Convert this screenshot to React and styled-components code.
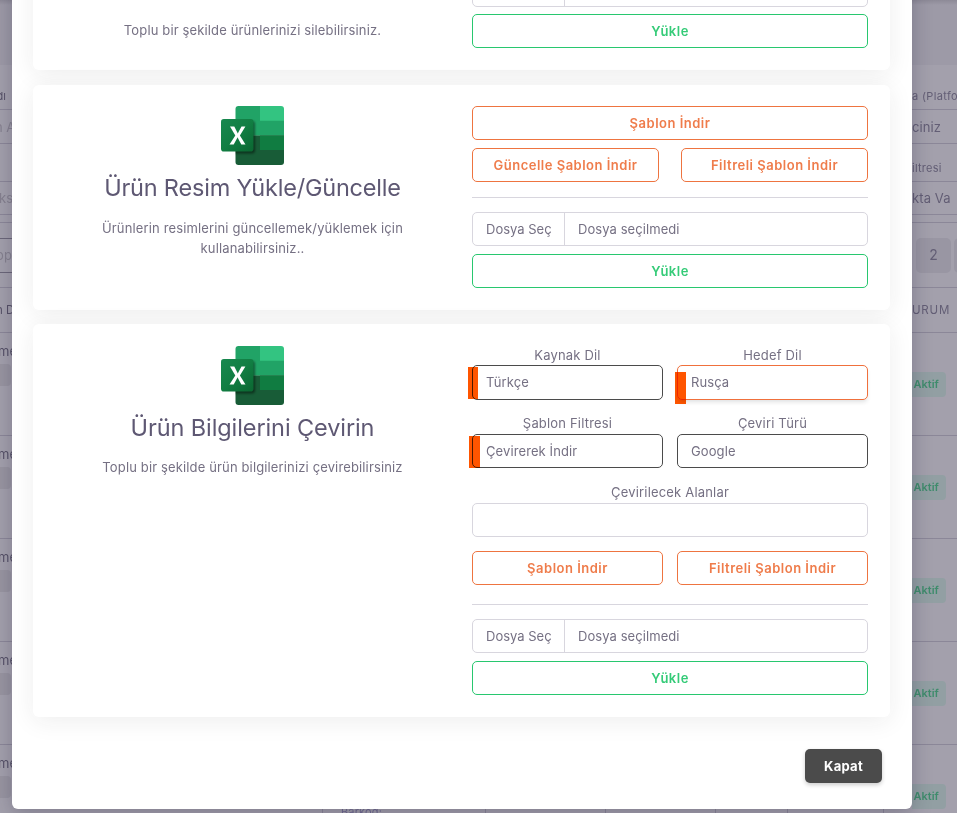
import React from "react";
import styled, { createGlobalStyle } from "styled-components";

const GlobalStyle = createGlobalStyle`
  *, *::before, *::after { box-sizing: border-box; }
  html, body { margin: 0; height: 100%; overflow: hidden; }
  body {
    background: #a3a0ac;
    color: #757083;
    font: 400 13px/20px Inter, "Open Sans", sans-serif;
    letter-spacing: 0.14px;
  }
`;

/* ---------- dimmed page ---------- */

const Page = styled.main`
  position: relative;
  height: 813px;
  overflow: hidden;
  display: flex;
  flex-direction: column;
  background: #a3a0ac;
`;

const Line = styled.div`
  display: flex;
  flex: none;
  justify-content: space-between;
  align-items: ${(p) => p.$align || "center"};
  height: ${(p) => p.$h}px;
  background: ${(p) => p.$bg || "transparent"};
  border-bottom: ${(p) => (p.$rule ? `1px solid ${p.$rule}` : "0")};
`;

const Left = styled.div`
  width: 20px;
  white-space: nowrap;
  display: flex;
  flex-direction: column;
  align-items: flex-start;
  font-size: ${(p) => p.$size || 13}px;
  color: ${(p) => (p.$faint ? "#85818f" : "#565167")};
  padding-top: ${(p) => p.$top || 0}px;
  margin-left: ${(p) => p.$shift || 0}px;
  letter-spacing: 0;
`;

const Right = styled.div`
  width: 45px;
  white-space: nowrap;
  display: flex;
  gap: 3px;
  padding-left: ${(p) => p.$pad || 0}px;
  padding-top: ${(p) => p.$top || 0}px;
  font-size: ${(p) => p.$size || 13}px;
  letter-spacing: ${(p) => p.$ls || 0}px;
  color: #635e75;
`;

const PageButton = styled.span`
  flex: none;
  width: 35px;
  height: 35px;
  border-radius: 5px;
  background: #9996a3;
  font-size: 14px;
  line-height: 33px;
  text-align: center;
`;

const SearchEdge = styled.div`
  width: 20px;
  height: 35px;
  margin-left: -4px;
  border: solid #6b6779;
  border-width: 1px 0;
  line-height: 33px;
  color: #85818f;
`;

const Thumb = styled.span`
  width: 11px;
  height: 22px;
  margin-top: 3px;
  margin-left: ${(p) => p.$shift}px;
  border-radius: 0 4px 4px 0;
  background: #9895a1;
`;

const Pill = styled.span`
  width: 34px;
  height: 25px;
  background: #929fa3;
  border-radius: 0 4px 4px 0;
  color: #3f8c6c;
  font-size: 11px;
  font-weight: 600;
  line-height: 24px;
  padding-left: 1.5px;
`;

const FootCells = styled.div`
  position: absolute;
  left: 322px;
  right: 0;
  bottom: 0;
  height: 68px;
  display: grid;
  grid-template-columns: 163px 120px 110px 72px 96px 1fr;
  font-size: 11px;
`;

const FootCell = styled.div`
  border-left: 1px solid #8b8798;
  padding: 59px 0 0 18px;
  line-height: 16px;
  color: #706a90;
  white-space: nowrap;
`;

/* ---------- modal ---------- */

const Modal = styled.section`
  position: absolute;
  left: 12px;
  top: -60px;
  width: 900px;
  height: 869px;
  padding: 0 22px 0 21px;
  border-radius: 6px;
  background: #fff;
  box-shadow: 0 5px 20px rgba(34, 28, 56, 0.28);
  display: flex;
  flex-direction: column;
`;

const Card = styled.article`
  flex: none;
  height: ${(p) => p.$h}px;
  margin-bottom: ${(p) => p.$gap}px;
  padding: 21px 22px 0 21px;
  display: grid;
  grid-template-columns: 397px 396px;
  column-gap: 21px;
  background: #fff;
  border-radius: 6px;
  box-shadow: 0 4px 24px rgba(34, 34, 34, 0.08);
`;

const Info = styled.div`
  display: flex;
  flex-direction: column;
  align-items: center;
  text-align: center;
  padding-top: ${(p) => p.$top || 0}px;
`;

const Title = styled.h2`
  margin: 6px 0 ${(p) => p.$mb}px;
  font-size: 23.5px;
  line-height: 34px;
  font-weight: 400;
  letter-spacing: ${(p) => p.$ls}px;
  color: #5e5873;
`;

const Description = styled.p`
  margin: 0;
  max-width: 340px;
`;

const Form = styled.div`
  display: flex;
  flex-direction: column;
`;

const Spacer = styled.div`
  flex: none;
  height: 12px;
`;

const Pair = styled.div`
  display: grid;
  grid-template-columns: 1fr 1fr;
  column-gap: ${(p) => p.$gap}px;
  margin-top: ${(p) => p.$mt || 0}px;
`;

const tones = { orange: "#ee7440", green: "#28c76f" };
const labels = { orange: "#ef7c4b", green: "#35cb78" };

const OutlineButton = styled.button`
  width: 100%;
  height: 34px;
  margin: ${(p) => p.$mt || 0}px 0 0;
  padding: 0;
  border: 1px solid ${(p) => tones[p.$tone]};
  border-radius: 5px;
  background: transparent;
  color: ${(p) => labels[p.$tone]};
  font: 600 13px/32px Inter, sans-serif;
  letter-spacing: 0.5px;
`;

const Rule = styled.hr`
  width: 100%;
  height: 1px;
  margin: ${(p) => p.$mt}px 0 14px;
  border: 0;
  background: #d8d6de;
`;

const FileField = styled.div`
  flex: none;
  display: flex;
  height: 34px;
  border: 1px solid #d8d6de;
  border-radius: 5px;
  line-height: 33px;
`;

const FileTrigger = styled.span`
  width: 92px;
  padding-left: 13px;
  border-right: 1px solid #d8d6de;
  letter-spacing: 0;
`;

const FileName = styled.span`
  padding-left: 13px;
  letter-spacing: 0.07px;
`;

const Field = styled.div`
  display: flex;
  flex-direction: column;
  margin-top: ${(p) => p.$mt || 0}px;
`;

const Label = styled.label`
  height: 20px;
  line-height: ${(p) => (p.$raised ? 18 : 20)}px;
  text-align: center;
  letter-spacing: 0.18px;
`;

const borders = { dark: "#4b4b4b", active: "#f0703c", light: "#d8d6de" };

const Control = styled.div`
  position: relative;
  height: ${(p) => p.$h || 34}px;
  padding-left: 13px;
  border: 1px solid ${(p) => borders[p.$kind]};
  border-radius: 5px;
  line-height: 33px;
  letter-spacing: 0.1px;
  box-shadow: ${(p) => (p.$kind === "active" ? "0 3px 4px -1px rgba(34, 41, 47, 0.14)" : "none")};
`;

const Marker = styled.span`
  position: absolute;
  left: ${(p) => p.$x}px;
  top: ${(p) => p.$y}px;
  width: ${(p) => p.$w}px;
  height: 32px;
  background: #ff5500;
  mix-blend-mode: multiply;
`;

const Footer = styled.footer`
  display: flex;
  justify-content: flex-end;
  padding: 0 8px 0 0;
`;

const CloseButton = styled.button`
  width: 77px;
  height: 34px;
  padding: 0;
  border: 0;
  border-radius: 5px;
  background: #4b4b4b;
  color: #fff;
  font: 700 13px/34px Inter, sans-serif;
  letter-spacing: 0.25px;
  box-shadow: 0 2px 4px rgba(0, 0, 0, 0.2);
`;

const Logo = styled.svg`
  display: block;
  flex: none;
`;

function ExcelLogo({ id }) {
  return (
    <Logo width="63" height="59" viewBox="0 0 63 59" aria-label="Excel">
      <defs>
        <clipPath id={`${id}-book`}>
          <rect x="14.5" y="0" width="48.5" height="59" rx="3" />
        </clipPath>
        <linearGradient id={`${id}-tile`} x1="0" y1="0" x2="1" y2="1">
          <stop offset="0" stopColor="#18884f" />
          <stop offset="0.5" stopColor="#117e43" />
          <stop offset="1" stopColor="#0b6631" />
        </linearGradient>
        <filter id={`${id}-soft`} x="-20%" y="-20%" width="150%" height="150%">
          <feGaussianBlur stdDeviation="1" />
        </filter>
      </defs>
      <g clipPath={`url(#${id}-book)`}>
        <path fill="#21a366" d="M14 0h26v15H14z" />
        <path fill="#33c481" d="M39 0h24v15H39z" />
        <path fill="#21a366" d="M39 14.7h24v15H39z" />
        <path fill="#21a366" d="M14 14.7h25v15H14z" />
        <path fill="#185c37" d="M14 29.4h49V59H14z" />
        <path fill="#107c41" d="M39 29.4h24v14.7H39z" />
        <rect x="2" y="15" width="32" height="32.5" rx="3" fill="#000" opacity="0.45" filter={`url(#${id}-soft)`} />
      </g>
      <rect x="0" y="13" width="32.5" height="32.5" rx="2.8" fill={`url(#${id}-tile)`} />
      <path
        fill="#fff"
        d="M8.5 38.5l5.8-9-5.3-9h4.3l2.9 5.7c.3.6.5 1 .5 1.3h.1l.6-1.3 3.1-5.7h3.9l-5.5 8.9 5.6 9.1h-4.2l-3.3-6.3c-.2-.3-.3-.6-.4-.9h-.1c-.1.3-.2.6-.4.9l-3.4 6.3z"
      />
    </Logo>
  );
}

function FilePicker() {
  return (
    <FileField>
      <FileTrigger>Dosya Seç</FileTrigger>
      <FileName>Dosya seçilmedi</FileName>
    </FileField>
  );
}

function Select({ label, value, kind = "dark", h, mt, raised, marker }) {
  return (
    <Field $mt={mt}>
      <Label $raised={raised}>{label}</Label>
      <Control $kind={kind} $h={h}>
        {value}
        {marker && <Marker $x={marker[0]} $y={marker[1]} $w={marker[2]} />}
      </Control>
    </Field>
  );
}

const RULE = "#8b8798";

function Backdrop() {
  return (
    <>
      <Line $h={65} $bg="linear-gradient(#8d8a97, #9d9aa7 5px, #9d9aa7)" />
      <Line $h={45} $rule={RULE} $align="flex-start">
        <Left $size={11} $top={21} $shift={-3.5}>dı</Left>
        <Right $size={11} $top={21} $ls={0.35}>a (Platfo</Right>
      </Line>
      <Line $h={34} $rule={RULE}>
        <Left $faint $shift={-5}>n A</Left>
        <Right $ls={0.1}>ciniz</Right>
      </Line>
      <Line $h={38} $rule={RULE} $align="flex-start">
        <Left />
        <Right $size={11} $top={14} $ls={0.25}>iltresi</Right>
      </Line>
      <Line $h={33} $rule={RULE}>
        <Left $faint $shift={-1}>ks</Left>
        <Right $ls={0.1}>kta Va</Right>
      </Line>
      <Line $h={8} $rule={RULE} />
      <Line $h={65} $rule={RULE}>
        <SearchEdge>op</SearchEdge>
        <Right $pad={4}>
          <PageButton>2</PageButton>
          <PageButton />
        </Right>
      </Line>
      <Line $h={45} $rule={RULE}>
        <Left $size={11.5} $shift={-4}>n D</Left>
        <Right $size={11.5} $ls={0.8}>URUM</Right>
      </Line>
      {[0, 1, 2, 3, 4].map((n) => (
        <Line key={n} $h={103} $rule={RULE} $align="flex-start">
          <Left $top={8} $shift={-2}>
            <span>me</span>
            <Thumb $shift={2} />
          </Left>
          <Right $top={38.6}>
            <Pill>Aktif</Pill>
          </Right>
        </Line>
      ))}
      <FootCells>
        <FootCell>Barkod:</FootCell>
        <FootCell />
        <FootCell />
        <FootCell />
        <FootCell />
        <FootCell />
      </FootCells>
    </>
  );
}

export default function App() {
  return (
    <>
      <GlobalStyle />
      <Page>
        <Backdrop />
        <Modal>
          <Card $h={130} $gap={15}>
            <Info $top={59}>
              <Description>Toplu bir şekilde ürünlerinizi silebilirsiniz.</Description>
            </Info>
            <Form>
              <Spacer />
              <FilePicker />
              <OutlineButton $tone="green" $mt={7}>Yükle</OutlineButton>
            </Form>
          </Card>

          <Card $h={225} $gap={14}>
            <Info>
              <ExcelLogo id="image" />
              <Title $ls={-0.2} $mb={13}>Ürün Resim Yükle/Güncelle</Title>
              <Description>Ürünlerin resimlerini güncellemek/yüklemek için kullanabilirsiniz..</Description>
            </Info>
            <Form>
              <OutlineButton $tone="orange">Şablon İndir</OutlineButton>
              <Pair $gap={22} $mt={8}>
                <OutlineButton $tone="orange">Güncelle Şablon İndir</OutlineButton>
                <OutlineButton $tone="orange">Filtreli Şablon İndir</OutlineButton>
              </Pair>
              <Rule $mt={15} />
              <FilePicker />
              <OutlineButton $tone="green" $mt={8}>Yükle</OutlineButton>
            </Form>
          </Card>

          <Card $h={393} $gap={32}>
            <Info $top={1}>
              <ExcelLogo id="translate" />
              <Title $ls={-0.1} $mb={12}>Ürün Bilgilerini Çevirin</Title>
              <Description>Toplu bir şekilde ürün bilgilerinizi çevirebilirsiniz</Description>
            </Info>
            <Form>
              <Pair $gap={14}>
                <Select label="Kaynak Dil" value="Türkçe" h={35} marker={[-5.5, 1, 10.5]} />
                <Select label="Hedef Dil" value="Rusça" kind="active" h={35} marker={[-3, 6, 10.5]} />
              </Pair>
              <Pair $gap={14} $mt={14}>
                <Select label="Şablon Filtresi" value="Çevirerek İndir" raised marker={[-4, 1, 10.5]} />
                <Select label="Çeviri Türü" value="Google" raised />
              </Pair>
              <Select label="Çevirilecek Alanlar" kind="light" mt={15} raised />
              <Pair $gap={14} $mt={14}>
                <OutlineButton $tone="orange">Şablon İndir</OutlineButton>
                <OutlineButton $tone="orange">Filtreli Şablon İndir</OutlineButton>
              </Pair>
              <Rule $mt={19} />
              <FilePicker />
              <OutlineButton $tone="green" $mt={8}>Yükle</OutlineButton>
            </Form>
          </Card>

          <Footer>
            <CloseButton>Kapat</CloseButton>
          </Footer>
        </Modal>
      </Page>
    </>
  );
}
